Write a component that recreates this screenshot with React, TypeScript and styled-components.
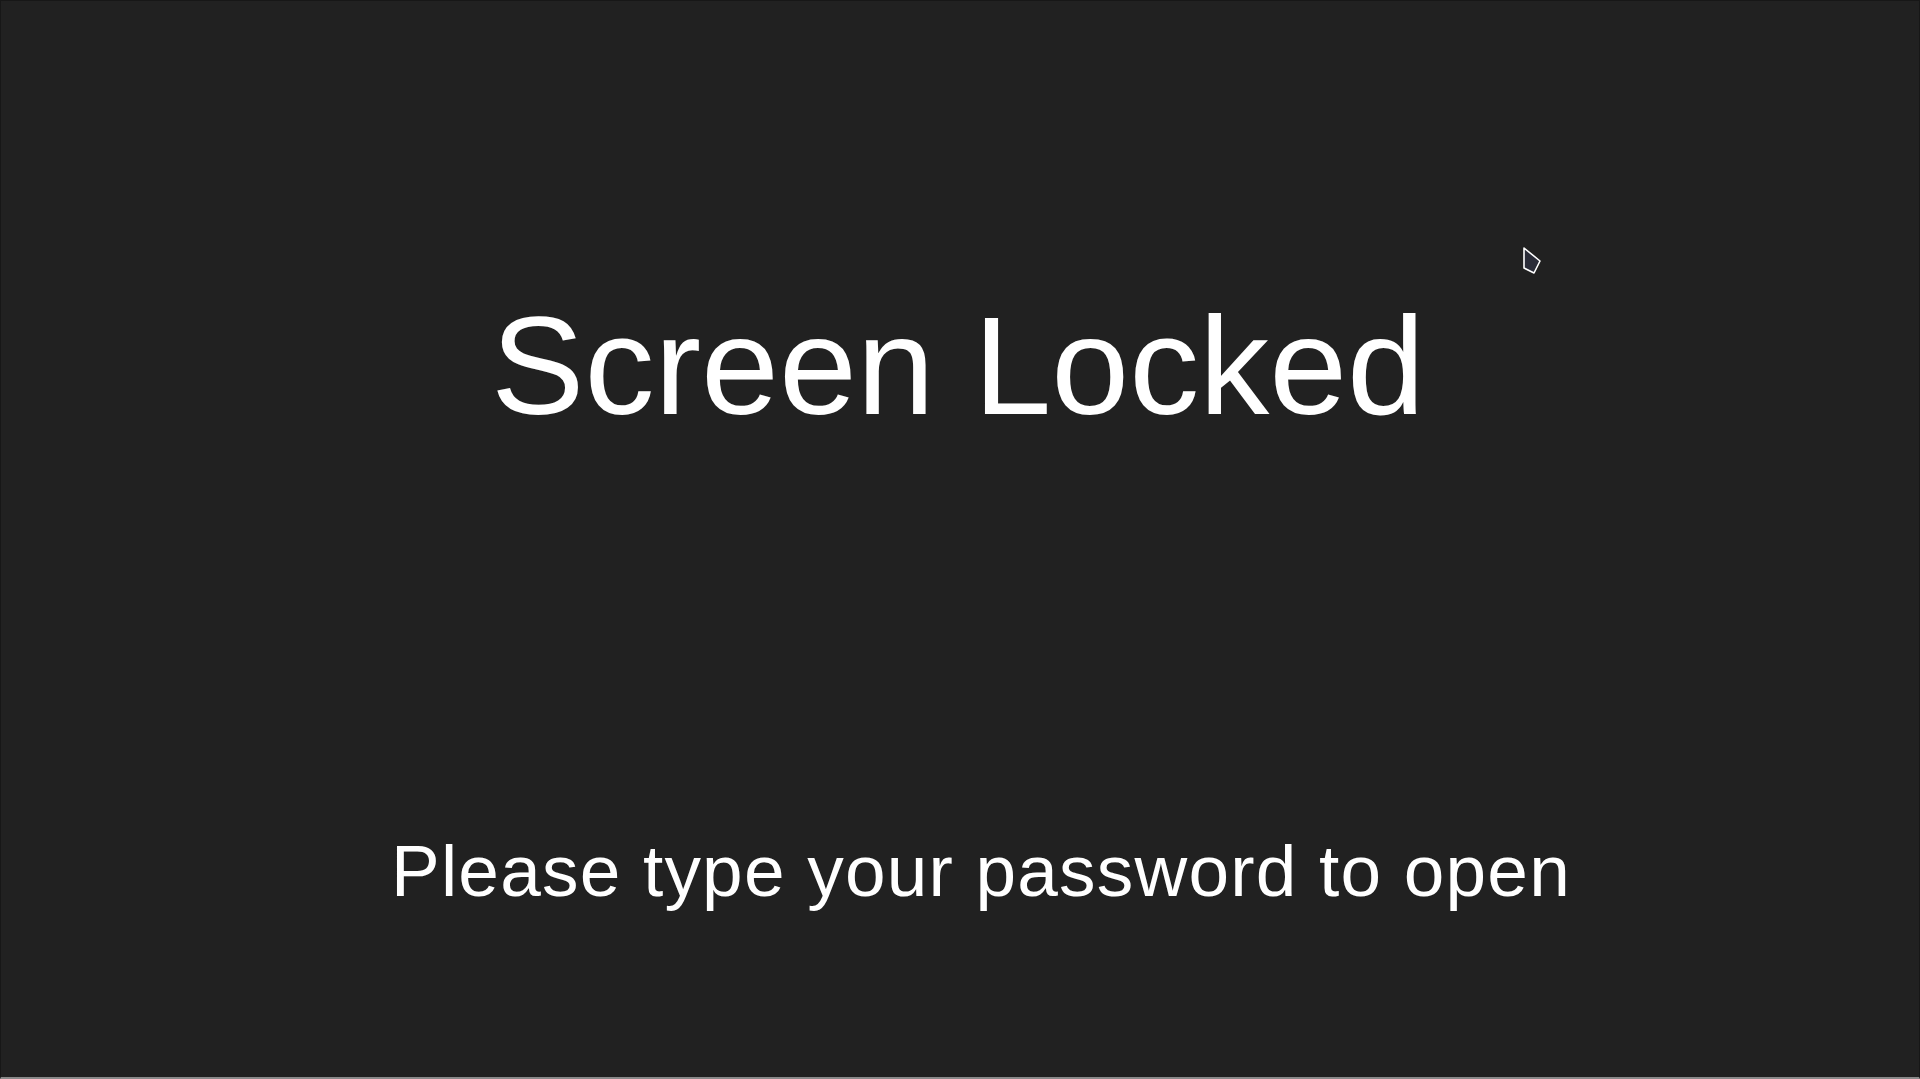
import styled, { createGlobalStyle } from "styled-components"

const GlobalStyle = createGlobalStyle`
    html, body {
        margin: 0;
        padding: 0;
        background-color: #212121;
    }

    #root {
        height: 100vh;
    }
`

const StyledLock = styled.div`
    position: relative;
    box-sizing: border-box;
    height: 1079px;
    display: flex;
    flex-direction: column;
    align-items: center;
    padding-top: 295px;
    background-color: #212121;
    border: 1px solid #171717;
    border-bottom: 2px solid #8a8a8a;
    font-family: "Liberation Sans", Arial, Helvetica, sans-serif;
    color: #ffffff;
    overflow: hidden;
`

const Title = styled.h1`
    margin: 0 0 0 -4px;
    font-size: 140px;
    font-weight: 400;
    line-height: 1;
    letter-spacing: 0px;
`

const Hint = styled.p`
    margin: 398px 0 0 42px;
    font-size: 73px;
    font-weight: 400;
    line-height: 1;
    letter-spacing: 1.2px;
`

const Pointer = styled.svg`
    position: absolute;
    left: 1519px;
    top: 243px;
`

function App() {
    return <>
        <GlobalStyle />
        <StyledLock>
            <Title>Screen Locked</Title>
            <Hint>Please type your password to open</Hint>
            <Pointer width="26" height="34" viewBox="0 0 26 34">
                <polygon points="4,4 20,17 14,29 4,24" fill="#2a2c38" stroke="#ffffff" strokeWidth="1.6" strokeLinejoin="round" />
            </Pointer>
        </StyledLock>
    </>
}

export default App
